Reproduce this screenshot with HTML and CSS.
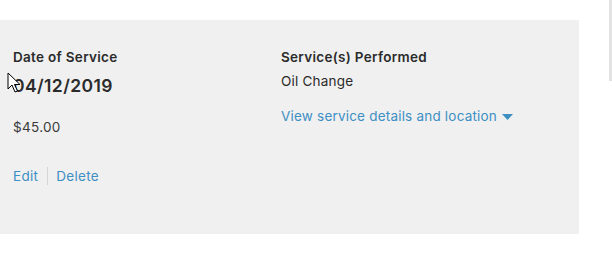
FILE: index.html
```html
<!DOCTYPE html>
<html lang="en">
  <head>
    <meta charset="UTF-8" />
    <meta name="viewport" content="width=device-width, initial-scale=1.0" />
    <title>Service History</title>
    <link rel="stylesheet" href="styles.css">
  </head>
  <body>
    <div class="page">
      <div class="service-card">
        <div class="column date-column">
          <div class="label">Date of Service</div>
          <div class="date">04/12/2019</div>
          <div class="price">$45.00</div>
          <div class="actions">
            <a class="action" href="#">Edit</a>
            <span class="divider"></span>
            <a class="action" href="#">Delete</a>
          </div>
        </div>
        <div class="column details-column">
          <div class="label">Service(s) Performed</div>
          <div class="service">Oil Change</div>
          <a class="details-link" href="#">View service details and location
            <svg class="caret" width="11" height="6" viewBox="0 0 11 6"><path d="M0 0h11L5.5 6z" fill="#3d8fc4"/></svg>
          </a>
        </div>
      </div>
      <div class="scrollbar"></div>
    </div>
    <svg class="cursor" width="13" height="21" viewBox="0 0 13 21">
      <path d="M1 1v16l4-4 3 7 2.5-1-3-6.5h5.5z" fill="#fff" stroke="#000" stroke-width="1"/>
    </svg>
  </body>
</html>
```

FILE: styles.css
```css
* {
  box-sizing: border-box;
}
body {
  margin: 0;
  background-color: #fff;
  font-family: Inter, "Noto Sans", Arial, sans-serif;
  color: #2b2b2b;
  position: relative;
}
.page {
  display: flex;
  width: 612px;
  height: 266px;
  padding-top: 20px;
}
.service-card {
  display: flex;
  width: 579px;
  height: 214px;
  background-color: #f0f0f0;
  padding: 27px 13px 0;
}
.column {
  display: flex;
  flex-direction: column;
}
.date-column {
  width: 268px;
}
.label {
  font-size: 13.5px;
  font-weight: 600;
  line-height: 20px;
  letter-spacing: 0.3px;
}
.date {
  margin-top: 8px;
  font-size: 17.5px;
  font-weight: 600;
  line-height: 22px;
  letter-spacing: 0.4px;
}
.price {
  margin-top: 20px;
  font-size: 13.5px;
  line-height: 20px;
  letter-spacing: 0.3px;
  color: #3a3a3a;
}
.actions {
  display: flex;
  align-items: center;
  margin-top: 29px;
  font-size: 13.5px;
  line-height: 20px;
  letter-spacing: 0.3px;
}
.action {
  color: #3d8fc4;
  text-decoration: none;
}
.divider {
  width: 1px;
  height: 18px;
  background-color: #d6d6d6;
  margin: 0 8px 0 9px;
}
.service {
  margin-top: 4px;
  font-size: 13.5px;
  line-height: 20px;
  letter-spacing: 0.2px;
}
.details-link {
  margin-top: 15px;
  font-size: 13.5px;
  line-height: 20px;
  letter-spacing: 0.2px;
  color: #3d8fc4;
  text-decoration: none;
}
.caret {
  vertical-align: middle;
  margin-left: 1px;
}
.scrollbar {
  margin-left: 30px;
  margin-top: -20px;
  width: 3px;
  height: 81px;
  background-color: #e2e2e2;
}
.cursor {
  position: absolute;
  left: 7px;
  top: 72px;
}
```
